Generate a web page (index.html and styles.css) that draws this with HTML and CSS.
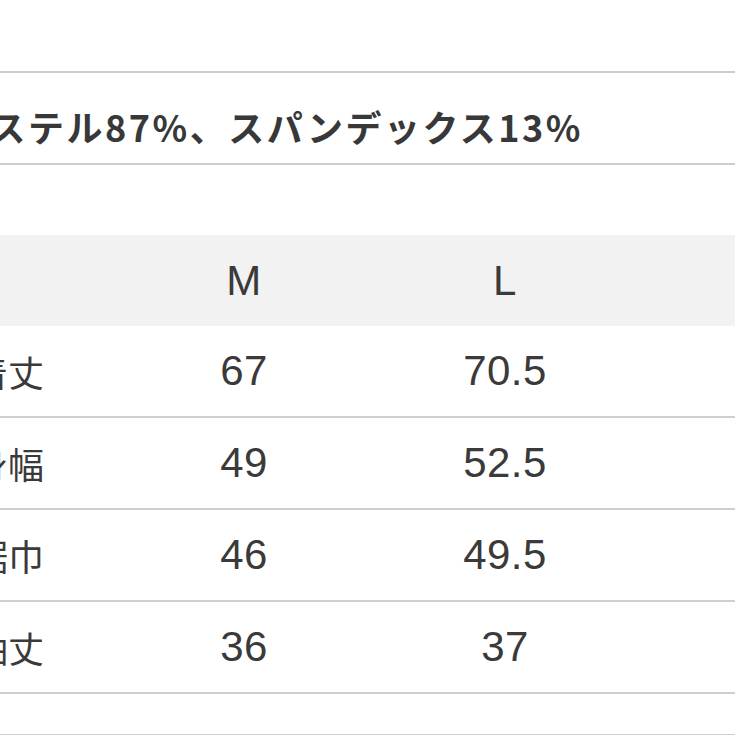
FILE: index.html
```html
<!DOCTYPE html>
<html lang="ja">
<head>
<meta charset="utf-8">
<link rel="stylesheet" href="styles.css">
</head>
<body>
<div class="page">
  <div class="material">
    <p class="material-text">ポリエステル87%、スパンデックス13%</p>
  </div>
  <div class="size-table">
    <div class="row head">
      <div class="cell label"></div>
      <div class="cell">M</div>
      <div class="cell">L</div>
    </div>
    <div class="row">
      <div class="cell label">着丈</div>
      <div class="cell">67</div>
      <div class="cell">70.5</div>
    </div>
    <div class="row">
      <div class="cell label">身幅</div>
      <div class="cell">49</div>
      <div class="cell">52.5</div>
    </div>
    <div class="row">
      <div class="cell label">裾巾</div>
      <div class="cell">46</div>
      <div class="cell">49.5</div>
    </div>
    <div class="row">
      <div class="cell label">袖丈</div>
      <div class="cell">36</div>
      <div class="cell">37</div>
    </div>
    <div class="row empty"></div>
  </div>
</div>
</body>
</html>
```

FILE: styles.css
```css
html, body {
  margin: 0;
  padding: 0;
  background: #ffffff;
  overflow: hidden;
}

.page {
  width: 735px;
  height: 735px;
  overflow: hidden;
  padding-top: 71px;
  box-sizing: border-box;
  color: #3a3a3a;
}

.material {
  border-top: 2px solid #cdcdcd;
  border-bottom: 2px solid #cdcdcd;
  height: 90px;
  box-sizing: content-box;
  overflow: hidden;
}

.material-text {
  margin: 0 0 0 -126px;
  padding-top: 35px;
  font-family: "Noto Sans CJK JP", "Noto Sans", sans-serif;
  font-weight: 700;
  font-size: 36px;
  line-height: 36px;
  letter-spacing: 2.5px;
  white-space: nowrap;
  color: #383838;
}

.size-table {
  margin-top: 70px;
  margin-left: -28px;
  width: 763px;
  overflow: hidden;
}

.row {
  display: grid;
  grid-template-columns: 141.5px 261px 261px 99.5px;
  height: 90px;
  border-bottom: 2px solid #cfcfcf;
  align-items: center;
}

.row.head {
  height: 91px;
  background: #f2f2f2;
  border-bottom: none;
}

.row.empty {
  height: 40px;
}

.cell {
  text-align: center;
  font-family: "Liberation Sans", Arial, sans-serif;
  font-size: 42px;
  letter-spacing: 0.5px;
  color: #3a3a3a;
}

.cell.label {
  text-align: left;
  font-family: "Noto Sans CJK JP", sans-serif;
  font-size: 36px;
  letter-spacing: 0;
  color: #3a3a3a;
}
```
